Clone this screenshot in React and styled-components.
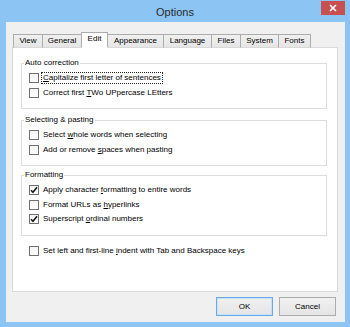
import React from 'react'
import styled, { createGlobalStyle } from 'styled-components'

const GlobalStyle = createGlobalStyle`
  html, body {
    margin: 0;
    padding: 0;
    background: #8cc4f3;
  }
  * { box-sizing: border-box; }
`

const tabs = [
  { label: 'View', width: 30 },
  { label: 'General', width: 40 },
  { label: 'Edit', width: 27, active: true },
  { label: 'Appearance', width: 57 },
  { label: 'Language', width: 49 },
  { label: 'Files', width: 30 },
  { label: 'System', width: 39 },
  { label: 'Fonts', width: 33 },
]

const groups = [
  {
    title: 'Auto correction',
    gap: 0,
    items: [
      { text: ['', 'C', 'apitalize first letter of sentences'], focused: true },
      { text: ['Correct first ', 'T', 'Wo UPpercase LEtters'] },
    ],
  },
  {
    title: 'Selecting & pasting',
    gap: 5,
    items: [
      { text: ['Select ', 'w', 'hole words when selecting'] },
      { text: ['Add or remove ', 's', 'paces when pasting'] },
    ],
  },
  {
    title: 'Formatting',
    gap: 3,
    items: [
      { text: ['Apply character ', 'f', 'ormatting to entire words'], checked: true },
      { text: ['Format URLs as ', 'h', 'yperlinks'] },
      { text: ['Superscript ', 'o', 'rdinal numbers'], checked: true },
    ],
  },
]

function Checkbox({ checked }) {
  return (
    <Box>
      {checked && (
        <svg width="8" height="8" viewBox="0 0 8 8">
          <path d="M1 4.2 L3 6.3 L7 1.3" fill="none" stroke="#1a1a1a" strokeWidth="1.6" />
        </svg>
      )}
    </Box>
  )
}

function Option({ text, checked, focused, indent }) {
  const [before, key, after] = text
  return (
    <Row $indent={indent}>
      <Checkbox checked={checked} />
      <Label $focused={focused}>
        {before}<u>{key}</u>{after}
      </Label>
    </Row>
  )
}

export default function App() {
  return (
    <>
      <GlobalStyle />
      <Window>
        <TitleBar>
          <span />
          <Title>Options</Title>
          <CloseButton>
            <svg width="8" height="8" viewBox="0 0 8 8">
              <path d="M1 1 L7 7 M7 1 L1 7" stroke="#fff" strokeWidth="1.6" />
            </svg>
          </CloseButton>
        </TitleBar>
        <Client>
          <TabStrip>
            {tabs.map(t => (
              <Tab key={t.label} $active={t.active} style={{ width: t.width }}>
                {t.label}
              </Tab>
            ))}
          </TabStrip>
          <Panel>
            {groups.map(g => (
              <Group key={g.title} $gap={g.gap}>
                <legend>{g.title}</legend>
                {g.items.map((item, i) => (
                  <Option key={i} {...item} />
                ))}
              </Group>
            ))}
            <Standalone>
              <Option text={['Set left and first-line ', 'i', 'ndent with Tab and Backspace keys']} indent />
            </Standalone>
          </Panel>
          <Buttons>
            <Button $default>OK</Button>
            <Button>Cancel</Button>
          </Buttons>
        </Client>
      </Window>
    </>
  )
}

const Window = styled.div`
  width: 350px;
  height: 327px;
  background: #8cc4f3;
  display: flex;
  flex-direction: column;
  font-family: "Liberation Sans", Arial, sans-serif;
  font-size: 8px;
  color: #000;
`

const TitleBar = styled.div`
  height: 22px;
  display: grid;
  grid-template-columns: 1fr auto 1fr;
  align-items: center;
`

const Title = styled.div`
  font-size: 11px;
  color: #2b2b2b;
  line-height: 22px;
  padding-top: 1px;
`

const CloseButton = styled.div`
  justify-self: end;
  align-self: start;
  margin-top: 1px;
  margin-right: 5px;
  width: 24px;
  height: 14px;
  background: #c75050;
  display: flex;
  align-items: center;
  justify-content: center;
`

const Client = styled.div`
  flex: 1;
  margin: 0 5px 5px 6px;
  background: #f0f0f0;
  padding: 10px 7px 5px 6px;
  display: flex;
  flex-direction: column;
`

const TabStrip = styled.div`
  display: flex;
  align-items: flex-end;
  height: 16px;
  margin-bottom: -1px;
  padding-left: 1px;
  position: relative;
  z-index: 1;
`

const Tab = styled.div`
  height: ${p => (p.$active ? '16px' : '14px')};
  margin-right: -1px;
  border: 1px solid #acacac;
  border-bottom: ${p => (p.$active ? '1px solid #fff' : '1px solid #d9d9d9')};
  background: ${p => (p.$active ? '#fff' : 'linear-gradient(#f0f0f0, #e5e5e5)')};
  display: flex;
  align-items: center;
  justify-content: center;
  line-height: 1;
  padding-bottom: ${p => (p.$active ? '2px' : '0')};
  position: relative;
  z-index: ${p => (p.$active ? 2 : 1)};
`

const Panel = styled.div`
  height: 245px;
  background: #fff;
  border: 1px solid #d9d9d9;
  padding: 9px 10px 0 8px;
  display: flex;
  flex-direction: column;
`

const Group = styled.fieldset`
  margin: ${p => p.$gap}px 0 0 0;
  padding: 2px 0 8px 0;
  border: 1px solid #dcdcdc;
  min-width: 0;

  legend {
    margin-left: 2px;
    padding: 0 1px;
    line-height: 12px;
    color: #000;
  }
`

const Row = styled.div`
  height: 14.5px;
  display: flex;
  align-items: center;
  gap: 3px;
  padding-left: ${p => (p.$indent ? '8px' : '7px')};
`

const Standalone = styled.div`
  margin-top: 8px;
`

const Box = styled.span`
  width: 10px;
  height: 10px;
  flex: none;
  border: 1px solid #707070;
  background: linear-gradient(#f4f4f4, #fff);
  display: flex;
  align-items: center;
  justify-content: center;
`

const Label = styled.span`
  line-height: 10px;
  padding: 0 1px;
  outline: ${p => (p.$focused ? '1px dotted #222' : 'none')};

  u {
    text-decoration: underline;
    text-underline-offset: 1px;
  }
`

const Buttons = styled.div`
  display: flex;
  justify-content: flex-end;
  gap: 6px;
  margin-top: 5px;
  padding-right: 2px;
`

const Button = styled.div`
  width: 57px;
  height: 19px;
  border: 1px solid ${p => (p.$default ? '#6aaae8' : '#acacac')};
  box-shadow: ${p => (p.$default ? 'inset 0 0 0 1px #c8e1f7' : 'none')};
  background: linear-gradient(#f0f0f0, #e5e5e5);
  display: flex;
  align-items: center;
  justify-content: center;
`
